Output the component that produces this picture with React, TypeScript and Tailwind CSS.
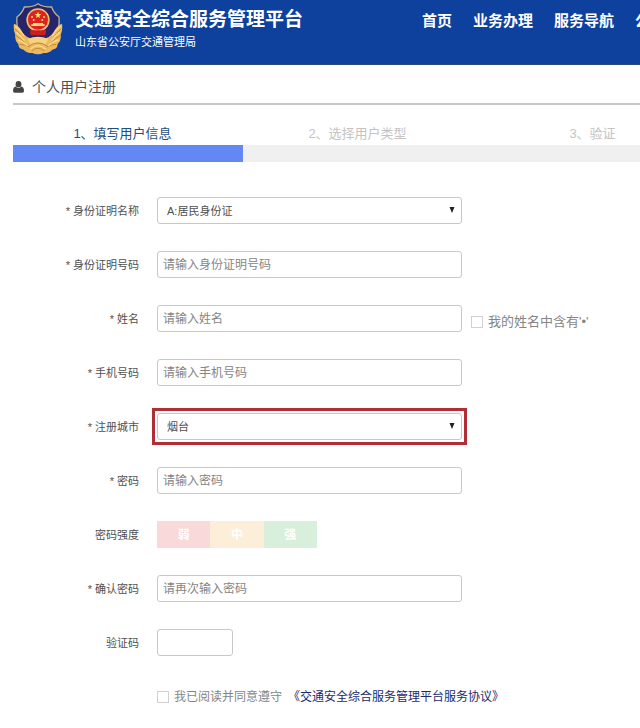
import type { ReactNode } from "react";

const navItems = ["首页", "业务办理", "服务导航", "公告公布"];

const steps = ["1、填写用户信息", "2、选择用户类型", "3、验证"];

const strengths = [
  { text: "弱", color: "bg-[#f9d9d9]" },
  { text: "中", color: "bg-[#fdeed9]" },
  { text: "强", color: "bg-[#d8efdb]" },
];

const controlClass =
  "block h-[27px] rounded-[3px] border border-[#c8c8c8] bg-white outline-none";

const Emblem = () => (
  <svg viewBox="0 0 150 156" className="h-[52px] w-[50px] shrink-0" aria-hidden="true">
    <path
      d="M75 2 Q62 12 34 12 Q28 30 12 42 Q8 92 34 120 L75 146 L116 120 Q142 92 138 42 Q122 30 116 12 Q88 12 75 2Z"
      fill="#28246c"
      stroke="#b9b48e"
      strokeWidth="4"
    />
    <path
      d="M3 62 Q16 66 24 80 Q32 98 52 106 L98 106 Q118 98 126 80 Q134 66 147 62 Q150 80 143 96 Q146 112 134 124 Q134 138 118 140 Q110 150 92 150 Q75 158 58 150 Q40 150 32 140 Q16 138 16 124 Q4 112 7 96 Q0 80 3 62Z"
      fill="#ecb95e"
    />
    <path
      d="M6 78 Q22 92 32 108 M9 98 Q24 106 38 122 M20 124 Q34 124 50 132 M144 78 Q128 92 118 108 M141 98 Q126 106 112 122 M130 124 Q116 124 100 132"
      fill="none"
      stroke="#c98c38"
      strokeWidth="3"
    />
    <path
      d="M6 68 Q22 80 32 98 M10 88 Q22 96 34 112 M14 111 Q28 114 44 128 M144 68 Q128 80 118 98 M140 88 Q128 96 116 112 M136 111 Q122 114 106 128"
      fill="none"
      stroke="#f9dc92"
      strokeWidth="4"
    />
    <circle cx="75" cy="51" r="35" fill="#ecc06c" />
    <path d="M50 82 L100 82 L97 97 L53 97Z" fill="#cc1e1e" />
    <circle cx="75" cy="50" r="30" fill="#dc2222" />
    <path
      d="M75 26 L78 33 L85 33 L79 38 L81 45 L75 41 L69 45 L71 38 L65 33 L72 33Z"
      fill="#ffdc6b"
    />
    <g fill="#ffdc6b">
      <circle cx="57" cy="42" r="3" />
      <circle cx="93" cy="42" r="3" />
      <circle cx="62" cy="51" r="3" />
      <circle cx="88" cy="51" r="3" />
      <path d="M60 60 H90 V64 H95 V69 H55 V64 H60Z" />
    </g>
    <path d="M44 108 Q75 94 106 108 L98 124 Q75 112 52 124Z" fill="#f7d280" />
    <path
      d="M46 130 Q75 110 104 130 M56 144 Q75 128 94 144"
      fill="none"
      stroke="#c98c38"
      strokeWidth="3"
    />
    <path d="M52 138 Q75 118 98 138" fill="none" stroke="#f9dc92" strokeWidth="4" />
  </svg>
);

const UserIcon = () => (
  <svg viewBox="0 0 22 24" className="h-3 w-[11px] shrink-0" fill="#444" aria-hidden="true">
    <ellipse cx="11" cy="6.5" rx="5.8" ry="6.5" />
    <path d="M5.5 11 Q11 17 16.5 11 Q22 12.5 22 20 Q22 23.5 18.5 23.5 H3.5 Q0 23.5 0 20 Q0 12.5 5.5 11Z" />
  </svg>
);

type FieldProps = {
  id?: string;
  label: string;
  required?: boolean;
  children: ReactNode;
};

const Field = ({ id, label, required, children }: FieldProps) => (
  <div className="flex min-h-[27px] items-center gap-[18px]">
    <label
      htmlFor={id}
      className="w-[126px] shrink-0 pt-0.5 text-right text-[11px] text-[#505050]"
    >
      {required && "* "}
      {label}
    </label>
    {children}
  </div>
);

type SelectProps = {
  id: string;
  options: string[];
};

const Select = ({ id, options }: SelectProps) => (
  <div className="relative w-[305px]">
    <select
      id={id}
      className={`${controlClass} w-full appearance-none pt-0.5 pl-[9px] text-[11px] text-[#505050]`}
    >
      {options.map((option) => (
        <option key={option}>{option}</option>
      ))}
    </select>
    <svg
      viewBox="0 0 6 6"
      className="pointer-events-none absolute top-[10px] right-[7px] size-1.5"
      aria-hidden="true"
    >
      <path d="M0.5 0H5.5L3 6Z" fill="#222" />
    </svg>
  </div>
);

type TextInputProps = {
  id: string;
  type?: string;
  placeholder: string;
};

const TextInput = ({ id, type = "text", placeholder }: TextInputProps) => (
  <input
    id={id}
    type={type}
    placeholder={placeholder}
    className={`${controlClass} w-[305px] px-[5px] text-xs text-[#505050] placeholder:text-[#858585]`}
  />
);

const checkboxClass =
  "size-3 shrink-0 appearance-none border border-[#d0d0d0] bg-white checked:bg-[#6488f3]";

const App = () => {
  return (
    <div className="overflow-hidden bg-white pb-6 font-['Liberation_Sans','Noto_Sans_CJK_SC',sans-serif]">
      <header className="flex h-[65px] items-start border-b border-[#2a4a7c] bg-[#0d419d] pl-[13px] text-white">
        <div className="flex gap-3 pt-[3px]">
          <Emblem />
          <div className="pt-[5px]">
            <h1 className="text-[19px] leading-6 font-bold whitespace-nowrap">
              交通安全综合服务管理平台
            </h1>
            <p className="text-[11px] leading-5 whitespace-nowrap">山东省公安厅交通管理局</p>
          </div>
        </div>
        <nav className="ml-[119px] flex gap-[21px] pt-[10px] text-[15px] leading-[22px] font-bold whitespace-nowrap">
          {navItems.map((item) => (
            <a key={item} href="#">
              {item}
            </a>
          ))}
        </nav>
      </header>

      <main className="pl-[13px]">
        <h2 className="flex h-10 items-center gap-2 border-b-2 border-[#c8c8c8] pt-[5px] text-sm text-[#505050]">
          <UserIcon />
          个人用户注册
        </h2>

        <ol className="flex pt-[18px] text-[13px] leading-[22px] text-[#c4c4c4]">
          {steps.map((step, i) => (
            <li
              key={step}
              className={`w-[235px] shrink-0 pr-4 text-center ${i === 0 ? "text-[#1f4f80]" : ""}`}
            >
              {step}
            </li>
          ))}
        </ol>
        <div className="h-[17px] bg-[#f0f0f0]">
          <div className="h-full w-[230px] bg-[#6488f3]" />
        </div>

        <form className="flex flex-col gap-[27px] pt-[35px]">
          <Field id="card-type" label="身份证明名称" required>
            <Select id="card-type" options={["A:居民身份证"]} />
          </Field>
          <Field id="card-no" label="身份证明号码" required>
            <TextInput id="card-no" placeholder="请输入身份证明号码" />
          </Field>
          <Field id="name" label="姓名" required>
            <div className="flex items-end gap-[9px]">
              <TextInput id="name" placeholder="请输入姓名" />
              <label className="flex items-center gap-[5px] text-[13px] leading-5 whitespace-nowrap text-[#858585]">
                <input type="checkbox" className={checkboxClass} />
                我的姓名中含有'•'
              </label>
            </div>
          </Field>
          <Field id="phone" label="手机号码" required>
            <TextInput id="phone" placeholder="请输入手机号码" />
          </Field>
          <Field id="city" label="注册城市" required>
            <div className="outline-3 outline-offset-2 outline-[#b32d35]">
              <Select id="city" options={["烟台"]} />
            </div>
          </Field>
          <Field id="password" label="密码" required>
            <TextInput id="password" type="password" placeholder="请输入密码" />
          </Field>
          <Field label="密码强度">
            <div className="flex h-[27px] w-40 text-xs leading-[28px] font-bold text-white">
              {strengths.map((s) => (
                <span key={s.text} className={`flex-1 text-center ${s.color}`}>
                  {s.text}
                </span>
              ))}
            </div>
          </Field>
          <Field id="confirm" label="确认密码" required>
            <TextInput id="confirm" type="password" placeholder="请再次输入密码" />
          </Field>
          <Field id="captcha" label="验证码">
            <input id="captcha" type="text" className={`${controlClass} w-[76px] px-[5px] text-xs`} />
          </Field>
          <div className="flex min-h-[27px] items-center gap-1.5 pl-[144px] text-xs whitespace-nowrap text-[#858585]">
            <label className="flex items-center gap-[5px]">
              <input type="checkbox" className={checkboxClass} />
              我已阅读并同意遵守
            </label>
            <a href="#" className="text-[#1c2a6b]">
              《交通安全综合服务管理平台服务协议》
            </a>
          </div>
        </form>
      </main>
    </div>
  );
};

export default App;
